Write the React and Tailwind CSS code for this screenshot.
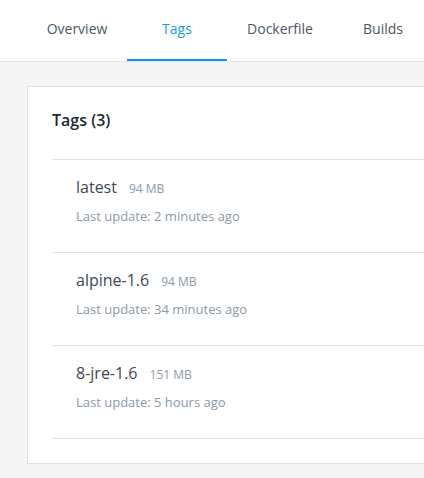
export default function App() {
  const tabs = [
    { t: "Overview", w: "w-[100px]" },
    { t: "Tags", w: "w-[100px]" },
    { t: "Dockerfile", w: "w-[106px]" },
    { t: "Builds", w: "w-[100px]" },
  ];
  const rows = [
    { name: "latest", size: "94 MB", when: "2 minutes ago" },
    { name: "alpine-1.6", size: "94 MB", when: "34 minutes ago" },
    { name: "8-jre-1.6", size: "151 MB", when: "5 hours ago" },
  ];
  return (
    <div className="w-[424px] h-[478px] overflow-hidden bg-[#f5f5f5]" style={{ fontFamily: '"Open Sans", sans-serif' }}>
      <div className="bg-white border-b border-[#e2e2e2] flex pl-[27px] h-[62px] overflow-hidden">
        {tabs.map(({ t, w }) => (
          <div
            key={t}
            className={
              "shrink-0 flex items-center justify-center text-sm border-b-2 whitespace-nowrap " +
              w +
              " " +
              (t === "Tags" ? "text-[#1a98e6] border-[#0c97e8]" : "text-[#4b5764] border-transparent")
            }
          >
            <span className="pb-[1px]">{t}</span>
          </div>
        ))}
      </div>
      <div className="pl-[27px] pt-6">
        <div className="w-[480px] bg-white border border-[#e0e0e0] pl-6 pt-[21px] pb-6">
          <div className="text-base leading-6 font-semibold text-[#1d2833] mb-[27px]">Tags (3)</div>
          {rows.map((r) => (
            <div key={r.name} className="border-t border-[#e3e3e3] pl-6 pt-[15px] h-[93px]">
              <div className="flex items-baseline leading-6">
                <span className="text-base text-[#3d4956]">{r.name}</span>
                <span className="text-xs text-[#8c9aa8] ml-3">{r.size}</span>
              </div>
              <div className="text-[13px] text-[#8c99a6] mt-[7px] leading-5">Last update: {r.when}</div>
            </div>
          ))}
          <div className="border-t border-[#e3e3e3]" />
        </div>
      </div>
    </div>
  );
}
